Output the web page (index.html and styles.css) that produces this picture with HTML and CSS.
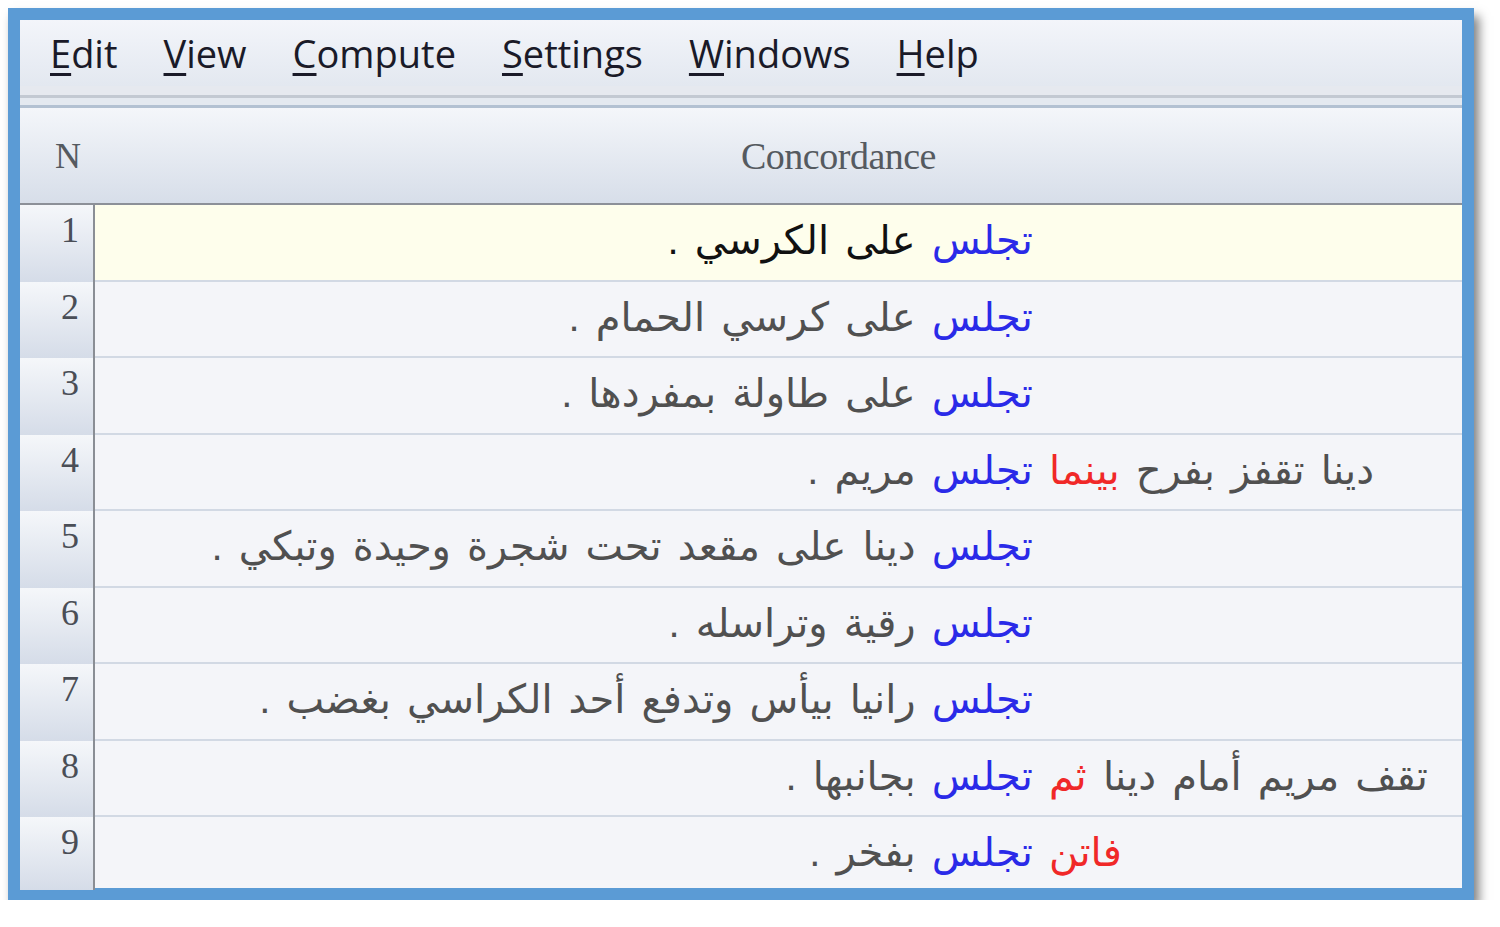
FILE: index.html
```html
<!DOCTYPE html>
<html>
<head>
  <title>Concord</title>
  <link rel="stylesheet" href="styles.css">
</head>
<body>

  <div class="frame">

    <!-- Menu -->
    <div class="menubar">
      <span class="menu-item"><u>E</u>dit</span>
      <span class="menu-item"><u>V</u>iew</span>
      <span class="menu-item"><u>C</u>ompute</span>
      <span class="menu-item"><u>S</u>ettings</span>
      <span class="menu-item"><u>W</u>indows</span>
      <span class="menu-item"><u>H</u>elp</span>
    </div>
    <div class="toolbar-sep"></div>

    <!-- Grid header -->
    <div class="grid-head">
      <div class="head-n">N</div>
      <div class="head-title">Concordance</div>
    </div>

    <!-- Concordance lines -->
    <div class="rows">
      <div class="row selected">
        <div class="num">1</div>
        <div class="ctx-after"><span class="hit">تجلس</span> على الكرسي .</div>
        <div class="ctx-before"></div>
      </div>
      <div class="row">
        <div class="num">2</div>
        <div class="ctx-after"><span class="hit">تجلس</span> على كرسي الحمام .</div>
        <div class="ctx-before"></div>
      </div>
      <div class="row">
        <div class="num">3</div>
        <div class="ctx-after"><span class="hit">تجلس</span> على طاولة بمفردها .</div>
        <div class="ctx-before"></div>
      </div>
      <div class="row">
        <div class="num">4</div>
        <div class="ctx-after"><span class="hit">تجلس</span> مريم .</div>
        <div class="ctx-before">دينا تقفز بفرح <span class="mark">بينما</span></div>
      </div>
      <div class="row">
        <div class="num">5</div>
        <div class="ctx-after"><span class="hit">تجلس</span> دينا على مقعد تحت شجرة وحيدة وتبكي .</div>
        <div class="ctx-before"></div>
      </div>
      <div class="row">
        <div class="num">6</div>
        <div class="ctx-after"><span class="hit">تجلس</span> رقية وتراسله .</div>
        <div class="ctx-before"></div>
      </div>
      <div class="row">
        <div class="num">7</div>
        <div class="ctx-after"><span class="hit">تجلس</span> رانيا بيأس وتدفع أحد الكراسي بغضب .</div>
        <div class="ctx-before"></div>
      </div>
      <div class="row">
        <div class="num">8</div>
        <div class="ctx-after"><span class="hit">تجلس</span> بجانبها .</div>
        <div class="ctx-before">تقف مريم أمام دينا <span class="mark">ثم</span></div>
      </div>
      <div class="row last">
        <div class="num">9</div>
        <div class="ctx-after"><span class="hit">تجلس</span> بفخر .</div>
        <div class="ctx-before"><span class="mark">فاتن</span></div>
      </div>
    </div>

  </div>

</body>
</html>
```

FILE: styles.css
```css
:root {
  --frame: #5b9bd5;
  --grid-bg: #f4f5f9;
  --line: #d2d9e4;
  --hit: #2a2ae8;
  --mark: #f02828;
  --ctx: #505050;
}

body {
  margin: 0;
  padding: 0;
  background: #ffffff;
  font-family: 'Liberation Sans', 'DejaVu Sans', sans-serif;
}

.frame {
  margin: 8px 0 0 8px;
  width: 1466px;
  height: 892px;
  box-sizing: border-box;
  border: 12px solid var(--frame);
  display: flex;
  flex-direction: column;
  background: var(--grid-bg);
  box-shadow: 5px 8px 10px rgba(0, 0, 0, 0.5);
}

/* menu */

.menubar {
  height: 66px;
  display: flex;
  align-items: center;
  gap: 46px;
  padding-left: 30px;
  background: linear-gradient(#f3f5fa, #e3e8f0);
  font-family: 'Open Sans', sans-serif;
  font-size: 38px;
  color: #1a1a28;
}

.menu-item u {
  text-decoration-thickness: 3px;
  text-underline-offset: 5px;
}

.toolbar-sep {
  height: 22px;
  box-sizing: border-box;
  background: linear-gradient(#e6e9ef 0, #e6e9ef 9px, #c3c9d2 9px, #c3c9d2 12px, #e4e9f0 12px, #e4e9f0 19px, #b3c1d2 19px);
}

/* header */

.grid-head {
  height: 97px;
  box-sizing: border-box;
  display: grid;
  grid-template-columns: 75px 1fr;
  align-items: center;
  background: linear-gradient(#f4f6fa, #d7dee9);
  border-bottom: 2px solid #8c9098;
  font-family: 'Liberation Serif', serif;
  font-size: 36px;
  color: #555a60;
}

.head-n {
  text-align: right;
  padding-right: 14px;
}

.head-title {
  text-align: center;
  padding-left: 120px;
  font-size: 38px;
  letter-spacing: -0.5px;
}

/* rows */

.rows {
  flex: 1;
  display: flex;
  flex-direction: column;
}

.row {
  height: 76.5px;
  box-sizing: border-box;
  display: grid;
  grid-template-columns: 75px 1fr 429px;
  border-bottom: 2px solid var(--line);
}

.row.last {
  flex: 1;
  border-bottom: none;
}

.num {
  background: linear-gradient(#f5f7fa, #d5dce8);
  border-right: 2px solid #8a8e95;
  margin-bottom: -2px;
  text-align: right;
  padding: 4px 14px 0 0;
  font-family: 'Liberation Serif', serif;
  font-size: 36px;
  color: #4a4e56;
}

.ctx-after, .ctx-before {
  direction: rtl;
  white-space: nowrap;
  font-size: 40px;
  line-height: 70px;
  word-spacing: 5px;
  color: var(--ctx);
}

.ctx-after {
  text-align: right;
}

.ctx-before {
  text-align: left;
  padding-left: 16px;
}

.row.selected {
  background: #fefeec;
}

.row.selected .ctx-after {
  color: #111111;
}

.hit {
  color: var(--hit);
}

.mark {
  color: var(--mark);
}
```
